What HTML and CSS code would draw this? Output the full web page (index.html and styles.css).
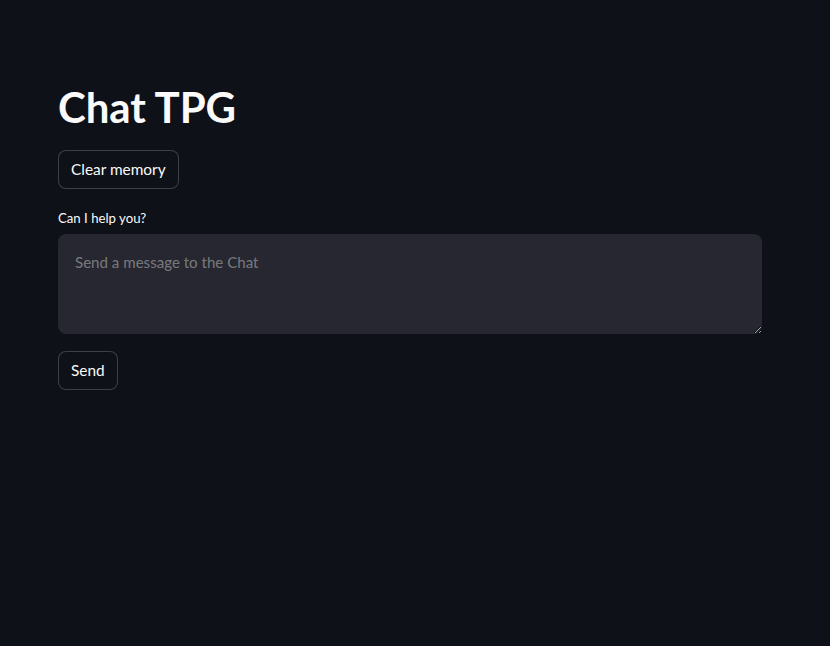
FILE: index.html
```html
<!DOCTYPE html>
<html lang="en">
<head>
<meta charset="utf-8">
<title>Chat TPG</title>
<link rel="stylesheet" href="styles.css">
</head>
<body>
<main class="main">
  <h1 class="title">Chat TPG</h1>
  <div class="row">
    <button class="btn" type="button">Clear memory</button>
  </div>
  <div class="field">
    <label class="label" for="msg">Can I help you?</label>
    <textarea id="msg" class="input" placeholder="Send a message to the Chat"></textarea>
  </div>
  <div class="row row-send">
    <button class="btn" type="button">Send</button>
  </div>
</main>
</body>
</html>
```
FILE: styles.css
```css
html, body {
  margin: 0;
  padding: 0;
  background: #0e1117;
  color: #fafafa;
  font-family: Lato, "Liberation Sans", sans-serif;
  height: 100%;
}
.main {
  display: flex;
  flex-direction: column;
  gap: 16px;
  width: 704px;
  padding: 81px 0 0 58px;
}
.title {
  margin: 0 0 1px 0;
  font-size: 42px;
  font-weight: 700;
  line-height: 52px;
  letter-spacing: -0.1px;
}
.row {
  display: flex;
}
.row-send {
  margin-top: 1px;
}
.btn {
  height: 39px;
  padding: 0 12px;
  background: #0e1117;
  color: #fafafa;
  border: 1px solid rgba(250, 250, 250, 0.2);
  border-radius: 8px;
  font-family: inherit;
  font-size: 15.4px;
  line-height: 1;
}
.field {
  display: flex;
  flex-direction: column;
  gap: 5px;
}
.label {
  font-size: 13.2px;
  line-height: 22px;
  padding-top: 2px;
}
.input {
  box-sizing: border-box;
  width: 704px;
  height: 100px;
  padding: 16px 17px;
  background: #262730;
  color: #fafafa;
  border: none;
  border-radius: 8px;
  font-family: inherit;
  font-size: 15.1px;
  line-height: 25px;
  outline: none;
}
.input::placeholder {
  color: rgba(250, 250, 250, 0.4);
}
```
